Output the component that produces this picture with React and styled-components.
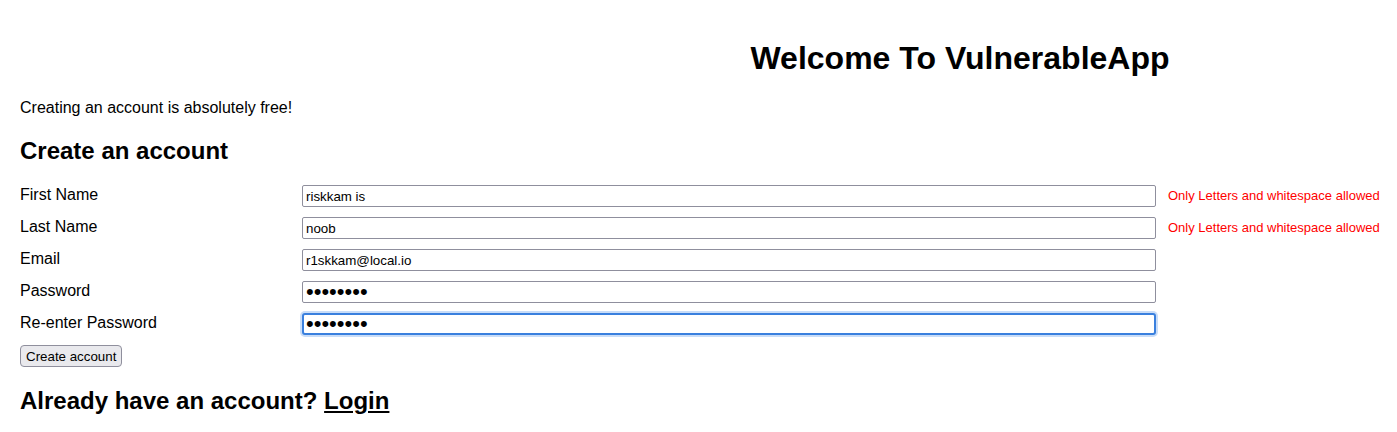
import React from "react";
import styled, { createGlobalStyle } from "styled-components";

const Global = createGlobalStyle`
  html, body { margin: 0; padding: 0; background: #fff; }
  body { font-family: "Liberation Sans", Arial, sans-serif; color: #000; }
`;

const Page = styled.div`
  display: flex;
  flex-direction: column;
  padding: 0 20px;
`;

const Title = styled.h1`
  margin: 40px 0 0;
  padding-left: 523px;
  text-align: center;
  font-size: 32px;
  line-height: 37px;
  font-weight: bold;
`;

const Intro = styled.p`
  margin: 22px 0 0;
  font-size: 16px;
  line-height: 18px;
`;

const Heading = styled.h2`
  margin: ${(p) => p.$top}px 0 0;
  font-size: 24px;
  line-height: 28px;
  font-weight: bold;
`;

const Form = styled.form`
  margin-top: 15px;
  display: flex;
  flex-direction: column;
  align-items: flex-start;
`;

const Row = styled.div`
  display: grid;
  grid-template-columns: 282px 854px auto;
  align-items: center;
  height: 32px;
`;

const Label = styled.label`
  font-size: 16px;
  line-height: 18px;
  margin-bottom: 3px;
`;

const Input = styled.input`
  box-sizing: border-box;
  width: 854px;
  height: 22px;
  margin: 0;
  padding: 0 3px;
  font-family: "Liberation Sans", Arial, sans-serif;
  font-size: ${(p) => (p.type === "password" ? "22px" : "13.33px")};
  line-height: 18px;
  color: #000;
  background: #fff;
  border: ${(p) => (p.$focused ? "2px solid #3a80de" : "1px solid #8f8f9d")};
  border-radius: ${(p) => (p.$focused ? "3px" : "2px")};
  box-shadow: ${(p) => (p.$focused ? "0 0 0 2px #c9ddf8" : "none")};
  padding-left: ${(p) => (p.$focused ? "2px" : "3px")};
  outline: none;
`;

const Error = styled.span`
  margin-left: 12px;
  font-size: 13px;
  color: #ff0000;
  white-space: nowrap;
  margin-bottom: 2px;
`;

const Button = styled.button`
  margin-top: 5px;
  box-sizing: border-box;
  height: 22px;
  padding: 0 5px;
  font-family: "Liberation Sans", Arial, sans-serif;
  font-size: 13.33px;
  color: #000;
  background: #e9e9ed;
  border: 1px solid #8f8f9d;
  border-radius: 4px;
`;

const LoginLink = styled.a`
  color: #000;
  text-decoration: underline;
`;

const fields = [
  { label: "First Name", type: "text", value: "riskkam is", error: "Only Letters and whitespace allowed" },
  { label: "Last Name", type: "text", value: "noob", error: "Only Letters and whitespace allowed" },
  { label: "Email", type: "text", value: "r1skkam@local.io" },
  { label: "Password", type: "password", value: "password" },
  { label: "Re-enter Password", type: "password", value: "password", focused: true },
];

export default function App() {
  return (
    <Page>
      <Global />
      <Title>Welcome To VulnerableApp</Title>
      <Intro>Creating an account is absolutely free!</Intro>
      <Heading $top={20}>Create an account</Heading>
      <Form onSubmit={(e) => e.preventDefault()}>
        {fields.map((f) => (
          <Row key={f.label}>
            <Label>{f.label}</Label>
            <Input type={f.type} defaultValue={f.value} $focused={f.focused} />
            {f.error ? <Error>{f.error}</Error> : <span />}
          </Row>
        ))}
        <Button type="submit">Create account</Button>
      </Form>
      <Heading $top={20}>
        Already have an account? <LoginLink href="#">Login</LoginLink>
      </Heading>
    </Page>
  );
}
